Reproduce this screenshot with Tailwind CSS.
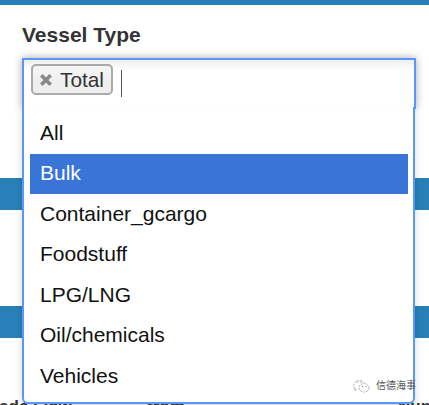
<!DOCTYPE html>
<html lang="en">
<head>
  <meta charset="UTF-8" />
  <meta name="viewport" content="width=device-width, initial-scale=1.0" />
  <title>Vessel Type</title>
  <script src="https://cdn.jsdelivr.net/npm/@tailwindcss/browser@4"></script>
</head>
<body class="bg-white font-['Liberation_Sans',Arial,sans-serif] text-[#333] overflow-hidden">

  <div class="relative h-[405px] overflow-hidden">
    <!-- page behind the open select -->
    <div class="h-[5px] bg-[#2980b9]"></div>
    <div class="h-[173px] pl-[22px] pt-4">
      <label class="block text-[21px] leading-7 font-bold">Vessel Type</label>
    </div>
    <div class="h-8 bg-[#2980b9]"></div>
    <div class="h-24"></div>
    <div class="h-8 bg-[#2980b9]"></div>
    <div class="flex pt-[57px] text-[17px] leading-6 font-bold whitespace-nowrap">
      <span class="w-[164px] -ml-[17px] shrink-0">Trade Flow</span>
      <span class="w-[251px] shrink-0">from</span>
      <span class="shrink-0">Number</span>
    </div>

    <!-- select control -->
    <div class="absolute left-[22px] top-[58px] w-[394px] h-[51px] border-2 border-b-0 border-[#5897fb] bg-white bg-linear-to-b from-[#eee] to-white to-20% shadow-[0_0_8px_rgba(0,0,0,0.35)] flex items-start pl-[7px] pt-1">
      <div class="flex items-center h-[31px] w-[82px] pl-[7px] gap-2 rounded-[5px] border-2 border-[#aaa] bg-linear-to-b from-[#f4f4f4] from-20% via-[#f0f0f0] via-50% to-[#eee]">
        <svg class="w-[12px] h-[12px] shrink-0" viewBox="0 0 12 12" stroke="#888" stroke-width="3.6" fill="none">
          <path d="M1.3 1.3l9.4 9.4M10.7 1.3l-9.4 9.4" />
        </svg>
        <span class="text-[20.8px] leading-6">Total</span>
      </div>
      <div class="ml-2 mt-1.5 w-px h-[27px] bg-[#555]"></div>
    </div>

    <!-- dropdown -->
    <div class="absolute left-[22px] top-[107px] w-[393px] h-[297px] border-2 border-t-0 border-[#5897fb] rounded-b-[6px] bg-white shadow-[0_6px_8px_rgba(0,0,0,0.15)] pl-1.5 pr-[5px] pt-1.5 text-[21px] text-[#111]">
      <ul>
        <li class="h-10 mb-[0.5px] px-2.5 leading-[39px]">All</li>
        <li class="h-10 mb-[0.5px] px-2.5 leading-[38px] bg-[#3875d7] text-white">Bulk</li>
        <li class="h-10 mb-[0.5px] px-2.5 leading-[39px]">Container_gcargo</li>
        <li class="h-10 mb-[0.5px] px-2.5 leading-[38px]">Foodstuff</li>
        <li class="h-10 mb-[0.5px] px-2.5 leading-[39px]">LPG/LNG</li>
        <li class="h-10 mb-[0.5px] px-2.5 leading-[38px]">Oil/chemicals</li>
        <li class="h-10 px-2.5 leading-[39px]">Vehicles</li>
      </ul>
    </div>

    <!-- watermark -->
    <div class="absolute left-[352px] top-[377px] flex items-center gap-1.5 text-[#555]">
      <svg class="w-[18px] h-[18px]" viewBox="0 0 18 18" fill="white" stroke="#999" stroke-width="0.8" stroke-dasharray="2 1">
        <path d="M3 11.5A5.5 4.8 0 1 1 12 5.5M3 11.5l-.5 2 2.2-1" />
        <ellipse cx="12" cy="10.8" rx="5" ry="4.2" />
        <path d="M4.5 5h1M8.5 5h1M10 9.5h1M13.5 9.5h1" stroke="#555" />
      </svg>
      <span class="text-[10px] leading-[18px] font-['Liberation_Sans','Noto_Sans_CJK_SC',sans-serif]">信德海事</span>
    </div>
  </div>

</body>
</html>
